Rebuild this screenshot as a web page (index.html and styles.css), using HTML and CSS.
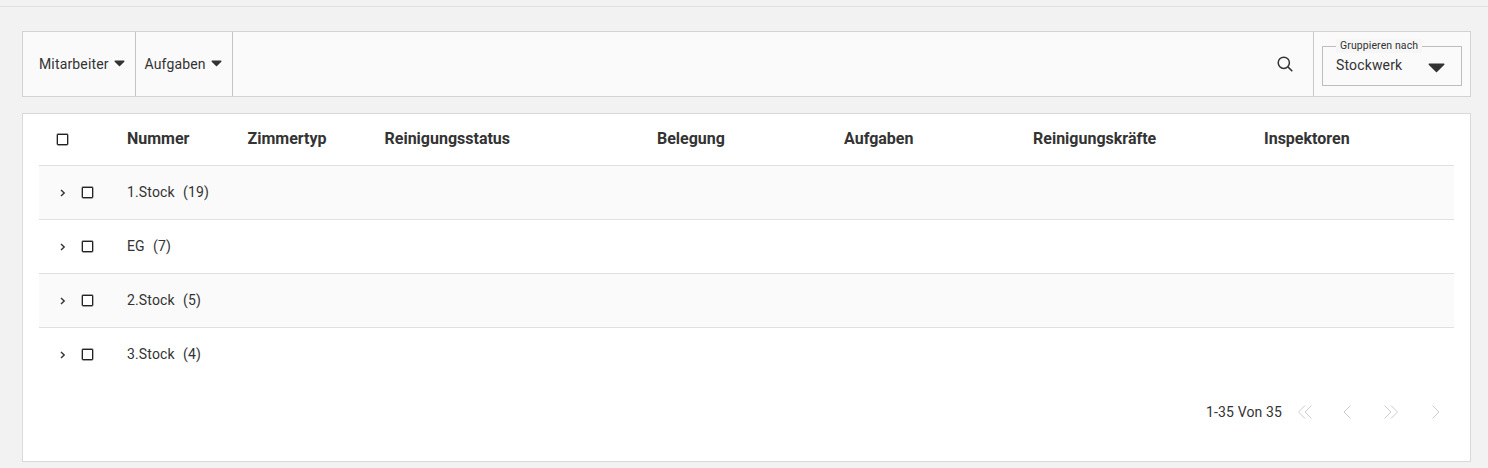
FILE: index.html
```html
<!DOCTYPE html>
<html lang="de">
<head>
<meta charset="utf-8">
<title>Reinigung</title>
<link rel="stylesheet" href="styles.css">
</head>
<body>
<div class="topline"></div>
<main class="page">
  <section class="toolbar">
    <button class="filter filter-a">Mitarbeiter <svg class="caret" width="11" height="7" viewBox="0 0 11 7"><path d="M1.200 1.200h8.600L5.500 5.600z" fill="#333" stroke="#333" stroke-width="1.400" stroke-linejoin="round"/></svg></button>
    <button class="filter filter-b">Aufgaben <svg class="caret" width="11" height="7" viewBox="0 0 11 7"><path d="M1.200 1.200h8.600L5.500 5.600z" fill="#333" stroke="#333" stroke-width="1.400" stroke-linejoin="round"/></svg></button>
    <div class="search">
      <svg class="search-icon" width="18" height="18" viewBox="0 0 18 18" fill="none" stroke="#333" stroke-width="1.5"><circle cx="7.800" cy="7.800" r="5.600"/><path d="M11.900 11.900 16.300 16.300"/></svg>
    </div>
    <div class="group">
      <div class="group-box">
        <span class="group-label">Gruppieren nach</span>
        <span class="group-value">Stockwerk</span>
        <svg class="caret-large" width="17" height="10" viewBox="0 0 17 10"><path d="M1.200 1.200h14.600L8.500 8.600z" fill="#333" stroke="#333" stroke-width="1.400" stroke-linejoin="round"/></svg>
      </div>
    </div>
  </section>
  <section class="card">
    <div class="table">
      <div class="row head">
        <div class="cell-check"><span class="check head-check"></span></div>
        <div>Nummer</div>
        <div>Zimmertyp</div>
        <div>Reinigungsstatus</div>
        <div>Belegung</div>
        <div>Aufgaben</div>
        <div>Reinigungskräfte</div>
        <div>Inspektoren</div>
      </div>
      <div class="group-row shaded">
        <div class="cell-check"><svg class="chev" width="8" height="10" viewBox="0 0 8 10" fill="none" stroke="#333" stroke-width="1.4"><path d="M2 2 5.200 5 2 8"/></svg><span class="check"></span></div>
        <div class="name">1.Stock&nbsp; (19)</div>
      </div>
      <div class="group-row">
        <div class="cell-check"><svg class="chev" width="8" height="10" viewBox="0 0 8 10" fill="none" stroke="#333" stroke-width="1.4"><path d="M2 2 5.200 5 2 8"/></svg><span class="check"></span></div>
        <div class="name">EG&nbsp; (7)</div>
      </div>
      <div class="group-row shaded">
        <div class="cell-check"><svg class="chev" width="8" height="10" viewBox="0 0 8 10" fill="none" stroke="#333" stroke-width="1.4"><path d="M2 2 5.200 5 2 8"/></svg><span class="check"></span></div>
        <div class="name">2.Stock&nbsp; (5)</div>
      </div>
      <div class="group-row last">
        <div class="cell-check"><svg class="chev" width="8" height="10" viewBox="0 0 8 10" fill="none" stroke="#333" stroke-width="1.4"><path d="M2 2 5.200 5 2 8"/></svg><span class="check"></span></div>
        <div class="name">3.Stock&nbsp; (4)</div>
      </div>
    </div>
    <div class="pager">
      <span class="pager-text">1-35 Von 35</span>
      <svg class="pg pg-1" width="14" height="14" viewBox="0 0 14 14" fill="none" stroke="#ccc"><path d="M7 .5.500 7 7 13.500M13.500.500 7 7l6.500 6.500"/></svg>
      <svg class="pg pg-2" width="8" height="14" viewBox="0 0 8 14" fill="none" stroke="#ccc"><path d="M7.500.500 1 7l6.500 6.500"/></svg>
      <svg class="pg pg-3" width="14" height="14" viewBox="0 0 14 14" fill="none" stroke="#ccc"><path d="M.500.500 7 7 .500 13.500M7 .500 13.500 7 7 13.500"/></svg>
      <svg class="pg pg-4" width="8" height="14" viewBox="0 0 8 14" fill="none" stroke="#ccc"><path d="M.500.500 7 7 .500 13.500"/></svg>
    </div>
  </section>
</main>
</body>
</html>
```

FILE: styles.css
```css
* { box-sizing: border-box; }
html, body { margin: 0; padding: 0; }
body {
  width: 1488px;
  height: 468px;
  overflow: hidden;
  background: #f2f2f2;
  font-family: Roboto, "Liberation Sans", sans-serif;
  font-size: 14px;
  letter-spacing: 0.15px;
  color: #333;
}
.topline {
  height: 7px;
  border-bottom: 1px solid #e0e0e0;
}
.page {
  padding: 24px 17px 0 22px;
  display: flex;
  flex-direction: column;
  gap: 16px;
}
.toolbar {
  height: 66px;
  display: flex;
  background: #fafafa;
  border: 1px solid #d3d3d3;
}
.filter {
  display: flex;
  align-items: center;
  justify-content: flex-start;
  gap: 5px;
  border: 0;
  border-right: 1px solid #c4c4c4;
  background: none;
  font: inherit;
  letter-spacing: inherit;
  color: inherit;
  padding: 0;
}
.filter-a { width: 113px; padding-left: 16px; }
.filter-b { width: 97px; padding-left: 8.5px; }
.caret {
  flex: none;
  margin-top: -2px;
}
.search {
  flex: 1;
  display: flex;
  align-items: center;
  justify-content: flex-end;
  padding-right: 19px;
}
.search-icon { margin-top: -1px; }
.group {
  width: 157px;
  border-left: 1px solid #c9c9c9;
  padding: 14px 8px 0 8px;
}
.group-box {
  position: relative;
  height: 40px;
  display: flex;
  align-items: center;
  justify-content: space-between;
  padding: 0 16px 0 13px;
  border: 1px solid #bdbdbd;
}
.group-label {
  position: absolute;
  left: 13px;
  top: -8px;
  padding: 0 4px;
  background: #f6f6f6;
  font-size: 10.5px;
  letter-spacing: 0.1px;
  line-height: 14px;
}
.group-value { margin-top: -2px; }
.caret-large {
  flex: none;
  margin-top: 3px;
}
.card {
  height: 349px;
  background: #fff;
  border: 1px solid #d9d9d9;
  padding: 0 16px;
}
.row {
  display: grid;
  grid-template-columns: 88px 120.5px 137px 272.5px 187px 189px 231px 190px;
  align-items: center;
}
.head {
  height: 52px;
  border-bottom: 1px solid #e0e0e0;
  font-size: 16px;
  font-weight: 700;
  letter-spacing: 0;
  padding-bottom: 3px;
}
.head .check { margin-top: 2px; }
.group-row {
  height: 54px;
  display: grid;
  grid-template-columns: 88px 1fr;
  align-items: center;
  border-bottom: 1px solid #e0e0e0;
}
.group-row.last { border-bottom-color: transparent; }
.shaded { background: #fafafa; }
.cell-check {
  display: flex;
  align-items: center;
  padding-left: 20px;
}
.head .cell-check { padding-left: 18px; }
.check {
  width: 11px;
  height: 11px;
  border: 1px solid #222;
  border-radius: 1px;
  background: #fff;
  box-shadow: 0 0 0 0.4px #444;
}
.chev { margin-right: 15px; }
.name { padding-bottom: 1px; word-spacing: 0.5px; }
.pager {
  display: flex;
  align-items: center;
  height: 16px;
  margin-top: 22px;
}
.pager-text { margin-left: 1167px; }
.pg { flex: none; }
.pg-1 { margin-left: 16px; }
.pg-2 { margin-left: 31px; }
.pg-3 { margin-left: 33px; }
.pg-4 { margin-left: 34px; }
```
